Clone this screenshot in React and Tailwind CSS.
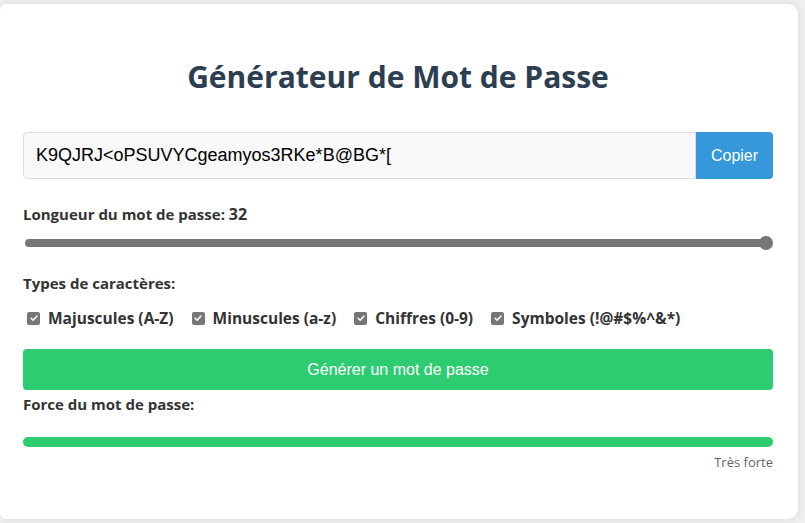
const options = [
  "Majuscules (A-Z)",
  "Minuscules (a-z)",
  "Chiffres (0-9)",
  "Symboles (!@#$%^&*)",
];

const CheckBox = () => (
  <span className="flex h-[13px] w-[13px] items-center justify-center rounded-[2px] bg-[#767676]">
    <svg viewBox="0 0 12 12" className="h-[10px] w-[10px]">
      <path d="M2.5 6.2 L5 8.6 L9.6 3.6" fill="none" stroke="white" strokeWidth="1.8" strokeLinecap="round" strokeLinejoin="round" />
    </svg>
  </span>
);

export default function App() {
  const ui = { fontFamily: '"Open Sans", "Noto Sans", sans-serif' };
  const arial = { fontFamily: '"Liberation Sans", Arial, sans-serif' };

  return (
    <div className="h-[523px] w-[805px] overflow-hidden bg-[#f0f0f0] pt-[4px]" style={ui}>
      <div className="h-[515px] w-[798px] rounded-r-[10px] rounded-l-[6px] bg-white pl-[23px] pr-[25px] pt-[55px] shadow-[0_0_10px_rgba(0,0,0,0.1)]">
        <h1 className="text-center text-[30px] font-bold leading-[36px] text-[#2c3e50]">
          Générateur de Mot de Passe
        </h1>

        <div className="mt-[37px] flex h-[47px]">
          <div
            className="flex flex-1 items-center rounded-l-[4px] border border-[#dddddd] bg-[#f8f8f8] px-[12px] text-[18px] text-black"
            style={arial}
          >
            K9QJRJ&lt;oPSUVYCgeamyos3RKe*B@BG*[
          </div>
          <button
            type="button"
            className="w-[77px] rounded-r-[4px] bg-[#3498db] text-[16px] text-white"
            style={arial}
          >
            Copier
          </button>
        </div>

        <div className="mt-[24px] text-[15px] font-bold leading-[22px] text-[#333]">
          Longueur du mot de passe: <span className="text-[16px]">32</span>
        </div>

        <div className="relative mt-[11px] h-[14px]">
          <div className="absolute left-[2px] right-[4px] top-[3px] h-[8px] rounded-full bg-[#777777]" />
          <div className="absolute right-0 top-0 h-[14px] w-[14px] rounded-full bg-[#777777]" />
        </div>

        <div className="mt-[22px] text-[15px] font-bold leading-[22px] text-[#333]">
          Types de caractères:
        </div>

        <div className="mt-[13px] flex items-center gap-[18px] pl-[4px] text-[15.5px] font-bold leading-[22px] text-[#333]">
          {options.map((label) => (
            <label key={label} className="flex items-center gap-[8px]">
              <CheckBox />
              {label}
            </label>
          ))}
        </div>

        <button
          type="button"
          className="mt-[20px] h-[41px] w-full rounded-[4px] bg-[#2ecc71] text-[16px] text-white"
          style={arial}
        >
          Générer un mot de passe
        </button>

        <div className="mt-[3px] text-[15px] font-bold leading-[22px] text-[#333]">
          Force du mot de passe:
        </div>

        <div className="mt-[22px] h-[10px] w-full rounded-full bg-[#2ecc71]" />

        <div className="mt-[6px] text-right text-[13px] leading-[18px] text-[#666]">Très forte</div>
      </div>
    </div>
  );
}
